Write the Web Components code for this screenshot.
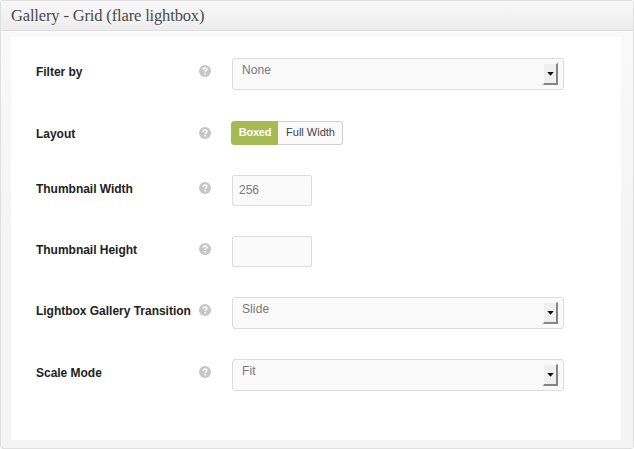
<!DOCTYPE html>
<html lang="en">
<head>
<meta charset="utf-8">
<title>Gallery settings</title>
<style>
html, body { margin: 0; height: 100%; background: #fff; }
body { font-family: "Liberation Sans", Arial, sans-serif; }
</style>
</head>
<body>
<meta-box>
  <span slot="title">Gallery - Grid (flare lightbox)</span>
  <field-row label="Filter by" style="--row:62px"><select-box>None</select-box></field-row>
  <field-row label="Layout" style="--row:55px;--control-top:1px;--shift:-1px"><button-set><span slot="on">Boxed</span><span slot="off">Full Width</span></button-set></field-row>
  <field-row label="Thumbnail Width" style="--row:61px"><text-box>256</text-box></field-row>
  <field-row label="Thumbnail Height" style="--row:61px"><text-box></text-box></field-row>
  <field-row label="Lightbox Gallery Transition" style="--row:62px"><select-box>Slide</select-box></field-row>
  <field-row label="Scale Mode" style="--row:62px"><select-box>Fit</select-box></field-row>
</meta-box>
<script>
function define(name, html) {
  customElements.define(name, class extends HTMLElement {
    connectedCallback() {
      if (this.shadowRoot) return;
      const root = this.attachShadow({ mode: 'open' });
      root.innerHTML = html;
      const label = root.querySelector('.label span');
      if (label) label.textContent = this.getAttribute('label');
    }
  });
}

define('help-icon', `
<style>
:host { display: block; width: 12px; height: 12px; }
svg { display: block; }
</style>
<svg width="12" height="12" viewBox="0 0 12 12">
  <circle cx="6" cy="6" r="6" fill="#c6c6c6"/>
  <path d="M4.1 4.7C4.1 3.5 4.9 2.9 6 2.9S7.9 3.5 7.9 4.5C7.9 5.6 6.2 5.7 6.2 7.1" fill="none" stroke="#fff" stroke-width="1.5"/>
  <rect x="5.4" y="8" width="1.6" height="1.5" fill="#fff"/>
</svg>`);

define('select-box', `
<style>
:host { display: flex; box-sizing: border-box; width: 332px; height: 32px; border: 1px solid #dcdcdc; border-radius: 3px; background: #fafafa; justify-content: space-between; padding: 4px 5px 4px 9px; font-size: 12px; line-height: 15px; color: #777; }
.value { letter-spacing: .1px; }
.arrow { box-sizing: border-box; width: 15px; height: 22px; background: #efefef; border: solid #858585; border-width: 0 2px 2px 0; border-left: 1px solid #fafafa; border-top: 1px solid #fafafa; display: flex; align-items: center; justify-content: center; }
svg { display: block; }
</style>
<span class="value"><slot></slot></span>
<span class="arrow"><svg width="7" height="4"><path d="M.3 0h6.4L3.5 3.7z"/></svg></span>`);

define('text-box', `
<style>
:host { display: block; box-sizing: border-box; width: 80px; height: 31px; border: 1px solid #dcdcdc; border-radius: 2px; background: #fafafa; padding: 0 6px; font-size: 12px; line-height: 29px; color: #777; }
</style>
<slot></slot>`);

define('button-set', `
<style>
:host { display: flex; box-sizing: border-box; height: 24px; width: 112px; font-size: 11px; line-height: 21px; }
span { box-sizing: border-box; text-align: center; border: 1px solid #d0d0d0; white-space: nowrap; }
.on { width: 47px; background: #a6ba52; border-color: #a6ba52; color: #fff; font-weight: bold; letter-spacing: -.2px; padding-left: 1px; border-radius: 3px 0 0 3px; }
.off { width: 65px; background: #fafafa; border-left: 0; color: #444; padding-left: 1px; border-radius: 0 3px 3px 0; }
</style>
<span class="on"><slot name="on"></slot></span><span class="off"><slot name="off"></slot></span>`);

define('field-row', `
<style>
:host { display: grid; grid-template-columns: 163px 33px 1fr; height: var(--row); align-items: start; }
.label { font-size: 12px; font-weight: bold; line-height: 28px; color: #222; white-space: nowrap; letter-spacing: -.02px; }
help-icon { margin-top: 7px; }
.control { padding-top: var(--control-top, 0); margin-left: var(--shift, 0); }
</style>
<div class="label"><span></span></div>
<help-icon></help-icon>
<div class="control"><slot></slot></div>`);

define('meta-box', `
<style>
:host { display: flex; flex-direction: column; box-sizing: border-box; width: 634px; height: 449px; border: 1px solid #dfdfdf; border-radius: 3px; background: linear-gradient(#f9f9f9 30px, #f4f4f4 230px); overflow: hidden; }
header { box-sizing: border-box; height: 30px; padding-left: 10px; border-bottom: 1px solid #dfdfdf; box-shadow: 0 1px 0 #fff; background: linear-gradient(#f9f9f9, #ececec); font: 15px/29px "Liberation Serif", serif; color: #464646; text-shadow: 0 1px 0 #fff; white-space: nowrap; }
.title { font-size: 16.5px; letter-spacing: -.15px; }
main { box-sizing: border-box; margin: 6px 12px 8px 10px; height: 403px; background: #fff; padding: 21px 0 0 25px; }
</style>
<header><span class="title"><slot name="title"></slot></span></header>
<main><slot></slot></main>`);
</script>
</body>
</html>
